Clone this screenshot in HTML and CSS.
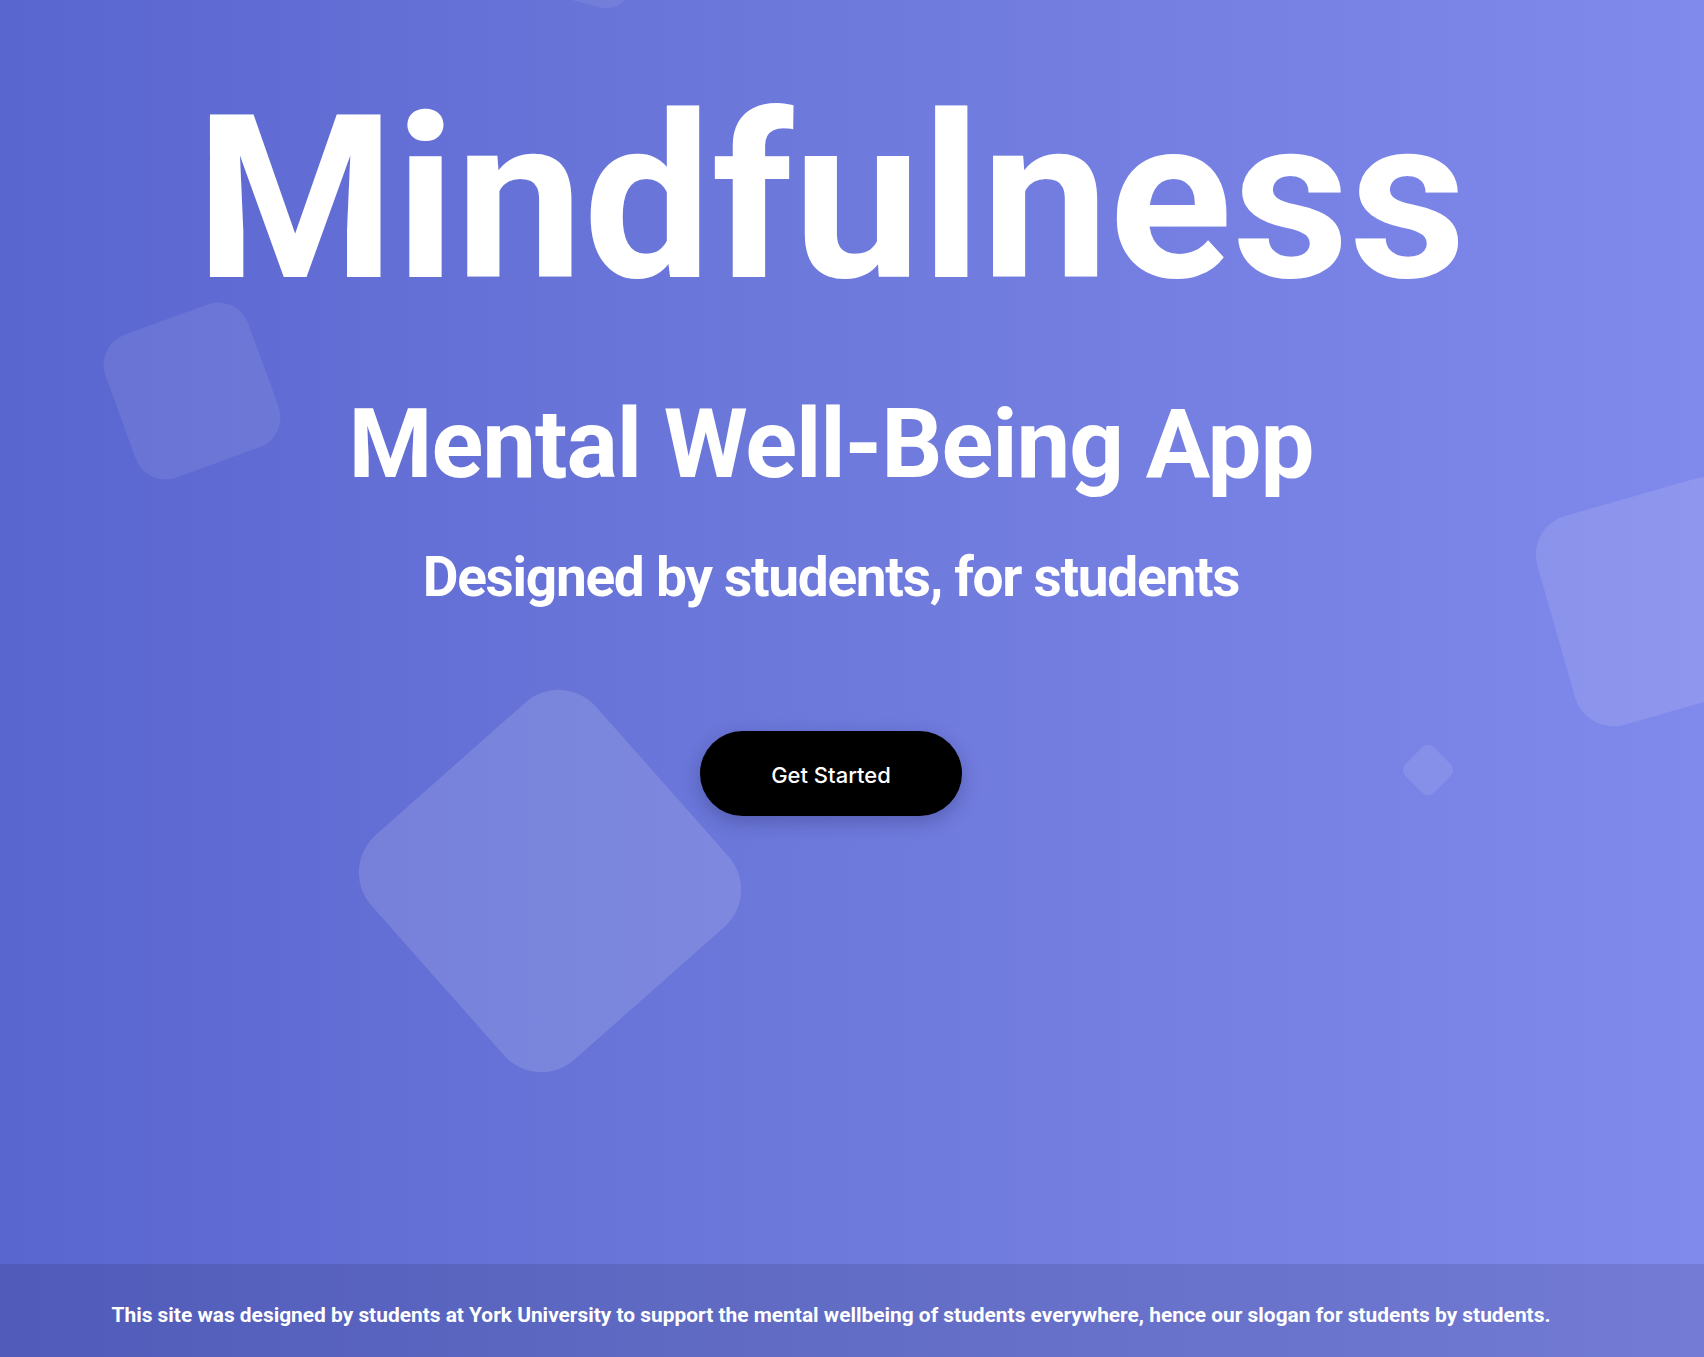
FILE: index.html
```html
<!DOCTYPE html>
<html lang="en">
<head>
<meta charset="utf-8">
<title>Mindfulness - Mental Well-Being App</title>
<link rel="stylesheet" href="styles.css">
</head>
<body>
<div class="page">
  <section class="hero">
    <div class="shape shape-top"></div>
    <div class="shape shape-left"></div>
    <div class="shape shape-right"></div>
    <div class="shape shape-big"></div>
    <div class="shape shape-small"></div>
    <div class="hero-content">
      <h1 class="title">Mindfulness</h1>
      <h2 class="subtitle">Mental Well-Being App</h2>
      <h3 class="tagline">Designed by students, for students</h3>
      <button class="cta" type="button">Get Started</button>
    </div>
  </section>
  <footer class="footer">
    <p class="footer-text">This site was designed by students at York University to support the mental wellbeing of students everywhere, hence our slogan for students by students.</p>
  </footer>
</div>
</body>
</html>
```

FILE: styles.css
```css
html, body {
  margin: 0;
  padding: 0;
  height: 100%;
}

body {
  background: linear-gradient(90deg, #5a66d0 0%, #6c78da 45%, #8089ec 100%);
  font-family: Roboto, "Liberation Sans", sans-serif;
  color: #ffffff;
  overflow: hidden;
}

.page {
  display: flex;
  flex-direction: column;
  min-height: 100vh;
}

.hero {
  position: relative;
  height: 1264px;
  overflow: hidden;
}

.hero-content {
  position: relative;
  z-index: 1;
  display: flex;
  flex-direction: column;
  align-items: center;
  padding: 85px 42px 0 0;
}

.title {
  margin: 0;
  font-size: 228px;
  line-height: 1;
  font-weight: 700;
  letter-spacing: 0;
}

.subtitle {
  margin: 83px 0 0;
  font-size: 96px;
  line-height: 1;
  font-weight: 700;
  letter-spacing: -1.1px;
}

.tagline {
  margin: 58px 0 0;
  font-size: 55px;
  line-height: 1;
  font-weight: 700;
  letter-spacing: -1.3px;
}

.cta {
  margin-top: 126px;
  width: 262px;
  height: 85px;
  border: none;
  border-radius: 43px;
  background: #000000;
  color: #ffffff;
  font-family: Inter, Roboto, sans-serif;
  font-size: 22px;
  font-weight: 500;
  padding-top: 3px;
  box-shadow: 0 6px 18px rgba(20, 20, 60, 0.25);
  cursor: pointer;
}

.shape {
  position: absolute;
  background: rgba(255, 255, 255, 0.1);
}

.shape-top {
  width: 80px;
  height: 80px;
  left: 556px;
  top: -75px;
  border-radius: 26px;
  transform: rotate(15deg);
  background: rgba(255, 255, 255, 0.08);
}

.shape-left {
  width: 152px;
  height: 152px;
  left: 116px;
  top: 315px;
  border-radius: 32px;
  transform: rotate(-20deg);
  background: rgba(255, 255, 255, 0.08);
}

.shape-right {
  width: 217px;
  height: 217px;
  left: 1552px;
  top: 493px;
  border-radius: 40px;
  transform: rotate(-16deg);
  background: rgba(255, 255, 255, 0.11);
}

.shape-big {
  width: 300px;
  height: 300px;
  left: 400px;
  top: 731px;
  border-radius: 50px;
  transform: rotate(48.5deg);
  background: rgba(255, 255, 255, 0.13);
}

.shape-small {
  width: 40px;
  height: 40px;
  left: 1408px;
  top: 750px;
  border-radius: 8px;
  transform: rotate(45deg);
  background: rgba(255, 255, 255, 0.1);
}

.footer {
  height: 93px;
  background: rgba(0, 0, 0, 0.1);
  display: flex;
  align-items: center;
  justify-content: center;
  padding-right: 42px;
}

.footer-text {
  margin: 8px 0 0;
  font-size: 20.9px;
  font-weight: 700;
  text-align: center;
}
```
